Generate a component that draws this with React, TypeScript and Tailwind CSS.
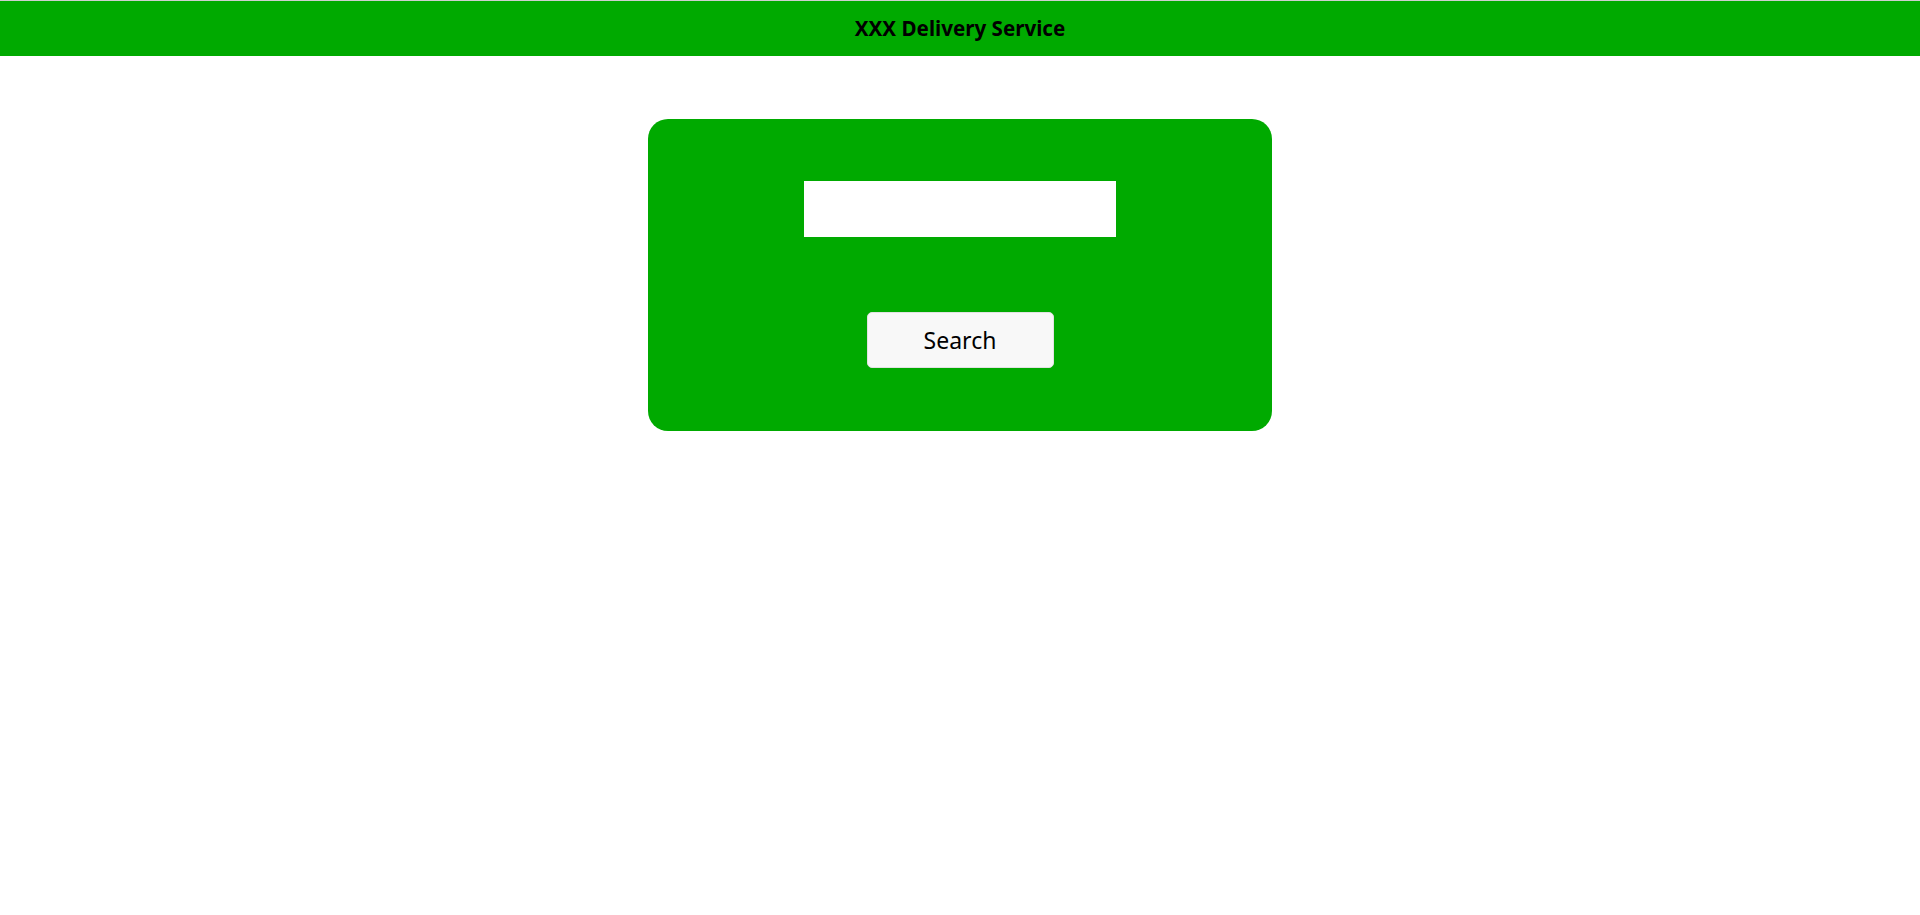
export default function App() {
  return (
    <div className="min-h-[915px] bg-white" style={{ fontFamily: '"Noto Sans", "Open Sans", sans-serif' }}>
      <header className="h-[56px] bg-[#00aa00] border-t border-[#cfcfcf] flex items-center justify-center">
        <h1 className="text-[20.6px] font-bold text-black leading-none">XXX Delivery Service</h1>
      </header>
      <main className="flex justify-center pt-[63px]">
        <div className="w-[624px] h-[312px] bg-[#00aa00] rounded-[20px] flex flex-col items-center pt-[62px]">
          <input type="text" className="w-[312px] h-[56px] bg-white outline-none border-0 px-2" />
          <button className="mt-[75px] w-[187px] h-[56px] bg-[#f8f8f8] rounded-[5px] border border-[#e2e2e2] text-[23px] text-black">
            Search
          </button>
        </div>
      </main>
    </div>
  );
}
